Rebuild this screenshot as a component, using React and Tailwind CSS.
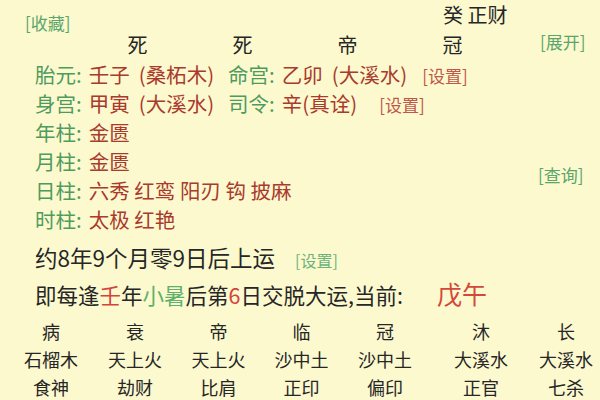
import React from 'react';

const green = 'text-[#4e9b5e]';
const red = 'text-[#a93a2d]';

const Line = ({ children }) => (
  <div className="flex items-baseline h-[29px] leading-[29px] whitespace-nowrap">{children}</div>
);

const Label = ({ children, className = '' }) => (
  <span className={`${green} mr-[7px] ${className}`}>{children}:</span>
);
const Val = ({ children }) => <span className={red}>{children}</span>;
const Paren = ({ children }) => <span className={`${red} ml-[9px]`}>({children})</span>;
const Set = ({ className = '' }) => (
  <span className={`text-[17px] text-[#c0574b] ${className}`}>[设置]</span>
);

const yun = [
  ['病', '石榴木', '食神'],
  ['衰', '天上火', '劫财'],
  ['帝', '天上火', '比肩'],
  ['临', '沙中土', '正印'],
  ['冠', '沙中土', '偏印'],
  ['沐', '大溪水', '正官'],
  ['长', '大溪水', '七杀'],
];

export default function App() {
  return (
    <div
      className="w-[600px] h-[400px] overflow-hidden bg-[#fcf9cf] text-[#262626]"
      style={{ fontFamily: '"Noto Sans CJK SC", "Noto Sans", sans-serif' }}
    >
      {/* header */}
      <div className="flex h-[60px]">
        <div className="w-[85px] pl-[25px] pt-[11px] text-[17px] leading-[24px] text-[#5aa56b]">[收藏]</div>
        <div className="grid grid-cols-[105px_105px_105px_105px] text-[20px]">
          {['死', '死', '帝', '冠'].map((c, i) => (
            <div key={i} className="flex flex-col">
              <div className="h-[30px] leading-[30px] pl-[43px] whitespace-nowrap">{i === 3 ? '癸 正财' : ''}</div>
              <div className="h-[30px] leading-[30px] text-center">{c}</div>
            </div>
          ))}
        </div>
        <div className="flex-1 pt-[30px] pl-[35px] text-[17px] leading-[24px] text-[#5aa56b]">[展开]</div>
      </div>

      {/* info lines */}
      <div className="flex text-[20.5px]">
        <div className="pl-[35px] w-[538px]">
          <Line>
            <Label>胎元</Label><Val>壬子</Val><Paren>桑柘木</Paren>
            <Label className="ml-[14px]">命宫</Label><Val>乙卯</Val><Paren>大溪水</Paren>
            <Set className="ml-[15px]" />
          </Line>
          <Line>
            <Label>身宫</Label><Val>甲寅</Val><Paren>大溪水</Paren>
            <Label className="ml-[14px]">司令</Label><Val>辛(真诠)</Val>
            <Set className="ml-[22px]" />
          </Line>
          <Line>
            <Label>年柱</Label><Val>金匮</Val>
          </Line>
          <Line>
            <Label>月柱</Label><Val>金匮</Val>
          </Line>
          <Line>
            <Label>日柱</Label><Val>六秀 红鸾 阳刃 钩 披麻</Val>
          </Line>
          <Line>
            <Label>时柱</Label><Val>太极 红艳</Val>
          </Line>
        </div>
        <div className="pt-[103px] text-[17px] leading-[24px] text-[#5aa56b]">[查询]</div>
      </div>

      {/* yun */}
      <div className="flex items-baseline pl-[35px] mt-[6px] text-[22.5px] leading-[34px] whitespace-nowrap">
        <span>约8年9个月零9日后上运</span>
        <span className="ml-[20px] text-[16px] text-[#6cb27a]">[设置]</span>
      </div>
      <div className="flex items-baseline pl-[35px] text-[21.5px] leading-[32px] whitespace-nowrap">
        <span>即每逢</span>
        <span className="text-[#d4443a]">壬</span>
        <span>年</span>
        <span className="text-[#5fb06c]">小暑</span>
        <span>后第</span>
        <span className="text-[#d4443a]">6</span>
        <span>日交脱大运,当前:</span>
        <span className="ml-[34px] text-[25px] text-[#d4473b]">戊午</span>
      </div>

      {/* grid */}
      <div className="ml-[9px] mt-[6px] grid grid-cols-[84px_84px_83px_83px_84px_108px_62px] text-[18px]">
        {yun.map((col, i) => (
          <div key={i} className="flex flex-col items-center whitespace-nowrap">
            {col.map((t, j) => (
              <div key={j} className="h-[28px] leading-[28px]">{t}</div>
            ))}
          </div>
        ))}
      </div>
    </div>
  );
}
